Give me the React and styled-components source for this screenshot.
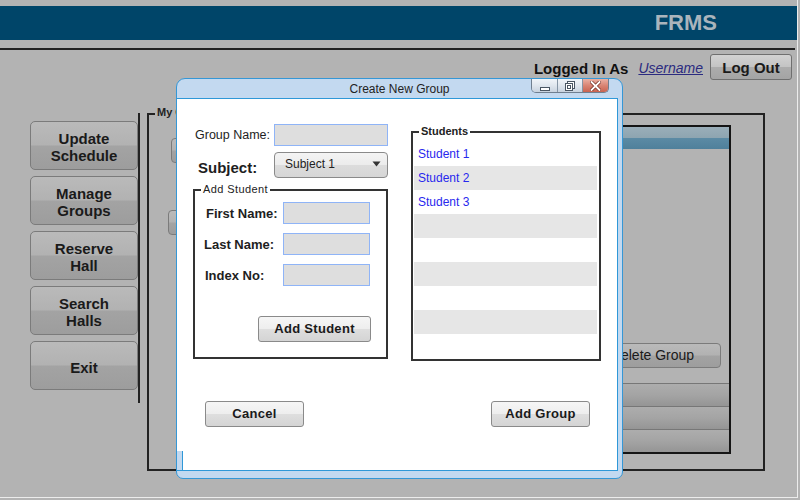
import styled, { createGlobalStyle } from 'styled-components'

const GlobalStyle = createGlobalStyle`
  html, body {
    margin: 0;
    padding: 0;
    background: #b3b3b3;
    overflow: hidden;
  }
  body {
    font-family: "Liberation Sans", Arial, sans-serif;
    color: #1e1e1e;
  }
  * {
    box-sizing: border-box;
  }
`

const Frame = styled.div`
  position: relative;
  width: 798px;
  height: 498px;
  padding-top: 6px;
  border-right: 1px solid #ececec;
  border-bottom: 1px solid #ececec;
`

const Header = styled.div`
  height: 34px;
  background: #004569;
  display: flex;
  align-items: center;
  justify-content: flex-end;
  padding-right: 80px;
`

const Brand = styled.h1`
  margin: 0;
  font-size: 22px;
  font-weight: 700;
  color: #aab4bc;
`

const Rule = styled.div`
  margin-top: 8px;
  width: 795px;
  height: 2px;
  background: #222;
`

const UserBar = styled.div`
  margin-top: 4px;
  height: 26px;
  display: flex;
  align-items: center;
  justify-content: flex-end;
  padding-right: 5px;
`

const LoggedIn = styled.span`
  font-size: 15px;
  font-weight: 700;
  color: #111;
  margin: 2px 10px 0 0;
`

const UserLink = styled.a`
  font-size: 14px;
  font-style: italic;
  color: #2b2b80;
  text-decoration: underline;
  margin: 2px 7px 0 0;
`

const GreyButton = styled.button`
  width: ${p => p.$w}px;
  height: ${p => p.$h}px;
  padding: 0;
  border: 1px solid #7b7b7b;
  border-radius: 5px;
  background: linear-gradient(#bababa 0%, #b2b2b2 48%, #a3a3a3 52%, #9d9d9d 100%);
  font-family: "Liberation Sans", Arial, sans-serif;
  font-size: ${p => p.$size || 15}px;
  font-weight: ${p => p.$weight || 700};
  line-height: 17px;
  color: #1a1a1a;
`

const NavButton = styled(GreyButton)`
  padding-top: 3px;
`

const LogOut = styled(GreyButton)`
  border-color: #6f6f6f;
  border-radius: 3px;
  background: linear-gradient(#d2d2d2 0%, #c4c4c4 48%, #acacac 52%, #a4a4a4 100%);
`

const Main = styled.div`
  display: flex;
  align-items: flex-start;
  margin-top: 33px;
`

const Sidebar = styled.nav`
  margin-left: 30px;
  width: 110px;
  height: 290px;
  padding-top: 8px;
  border-right: 2px solid #222;
  display: flex;
  flex-direction: column;
  gap: 6px;
`

const GroupBox = styled.div`
  position: relative;
  margin-left: 7px;
  width: 618px;
  height: 358px;
  border: 2px solid #222;
  display: flex;
  align-items: flex-start;
`

const Legend = styled.span`
  position: absolute;
  top: ${p => p.$top || -8}px;
  left: 6px;
  padding: 0 2px;
  background: ${p => p.$bg || '#fff'};
  font-size: 11px;
  font-weight: ${p => p.$weight || 400};
  letter-spacing: ${p => p.$spacing || 0}px;
  line-height: 13px;
  color: #222;
`

const ActionColumn = styled.div`
  display: flex;
  flex-direction: column;
  align-items: flex-start;
  padding-top: 23px;
  gap: 47px;
`

const SideAction = styled(GreyButton)`
  margin-left: ${p => p.$indent}px;
  border-radius: 4px;
`

const GroupPanel = styled.div`
  margin: 10px 32px 0 auto;
  width: 317px;
  height: 329px;
  border: 2px solid #151515;
  display: flex;
  flex-direction: column;
`

const PanelHeader = styled.div`
  height: 22px;
  background: linear-gradient(#9aaeb9 0%, #8ea5b1 48%, #5b8aa4 52%, #4f809b 100%);
`

const DeleteButton = styled(GreyButton)`
  margin: auto 8px 15px auto;
  border-radius: 4px;
`

const PanelRow = styled.div`
  height: 23px;
  border-top: 1px solid #777;
  background: linear-gradient(#adadad 0%, #a4a4a4 50%, #959595 100%);
`

/* dialog */

const Dialog = styled.div`
  position: absolute;
  left: 176px;
  top: 78px;
  width: 447px;
  height: 401px;
  background: #c3d9f0;
  border: 1px solid #3597d6;
  border-radius: 9px 9px 7px 7px;
  display: flex;
  flex-direction: column;
`

const TitleBar = styled.div`
  position: relative;
  height: 19px;
  display: flex;
  align-items: center;
  justify-content: center;
  font-size: 12px;
  color: #222;
`

const WindowControls = styled.div`
  position: absolute;
  top: 0;
  right: 13px;
  height: 14px;
  display: flex;
  border: 1px solid #6f7f90;
  border-top: none;
  border-radius: 0 0 5px 5px;
  overflow: hidden;
`

const Control = styled.span`
  width: ${p => p.$w}px;
  height: 100%;
  display: flex;
  align-items: center;
  justify-content: center;
  border-left: ${p => (p.$first ? 'none' : '1px solid #8595a5')};
  background: ${p =>
    p.$close
      ? 'linear-gradient(#eab0a3, #d98574 50%, #c96350)'
      : 'linear-gradient(#f1f5f9, #dfe6ee 50%, #c8d3df)'};
`

const DialogBody = styled.div`
  position: relative;
  flex: 1;
  margin: 0 4px 7px 0;
  background: #fff;
  border: 1px solid #2f98d8;
  border-left: none;
  display: flex;
  flex-direction: column;
`

const CornerNotch = styled.span`
  position: absolute;
  left: 0;
  bottom: 0;
  width: 6px;
  height: 19px;
  background: #c3d9f0;
  border-right: 1px solid #2f98d8;
`

const TopSection = styled.div`
  display: flex;
  align-items: flex-start;
  padding-top: 25px;
`

const LeftCol = styled.div`
  margin-left: 16px;
  width: 195px;
  display: flex;
  flex-direction: column;
`

const FieldRow = styled.div`
  display: flex;
  align-items: center;
  height: ${p => p.$h}px;
  margin-top: ${p => p.$mt || 0}px;
`

const FieldLabel = styled.label`
  width: 81px;
  padding-left: ${p => p.$pl}px;
  padding-top: ${p => p.$pt || 0}px;
  font-size: ${p => p.$size}px;
  font-weight: ${p => p.$weight || 400};
  color: #1e1e1e;
`

const TextBox = styled.div`
  width: ${p => p.$w}px;
  height: 22px;
  background: #dedede;
  border: 1px solid #8fb4f7;
`

const Select = styled.div`
  width: 114px;
  height: 26px;
  padding: 0 6px 2px 10px;
  display: flex;
  align-items: center;
  justify-content: space-between;
  border: 1px solid #8a8a8a;
  border-radius: 4px;
  background: linear-gradient(#f4f4f4 0%, #ececec 48%, #dcdcdc 52%, #d6d6d6 100%);
  font-size: 12px;
  color: #222;
`

const AddStudentBox = styled.div`
  position: relative;
  margin-top: 11px;
  width: 195px;
  border: 2px solid #333;
  padding: 11px 15px 15px 10px;
  display: flex;
  flex-direction: column;
`

const StudentForm = styled.div`
  display: grid;
  grid-template-columns: 78px 87px;
  grid-auto-rows: 22px;
  row-gap: 9px;
  align-items: center;
`

const FormLabel = styled.label`
  font-size: 13px;
  font-weight: 700;
  color: #1e1e1e;
  margin-left: ${p => p.$shift || 0}px;
`

const LightButton = styled.button`
  width: ${p => p.$w}px;
  height: 26px;
  padding: 0 0 2px;
  border: 1px solid #8a8a8a;
  border-radius: 3px;
  background: linear-gradient(#f6f6f6 0%, #eeeeee 48%, #dedede 52%, #d4d4d4 100%);
  font-family: "Liberation Sans", Arial, sans-serif;
  font-size: 13px;
  font-weight: 700;
  letter-spacing: 0.3px;
  color: #1a1a1a;
  align-self: ${p => p.$align || 'auto'};
  margin-top: ${p => p.$mt || 0}px;
`

const StudentsBox = styled.div`
  position: relative;
  margin: 7px 0 0 23px;
  width: 190px;
  height: 230px;
  border: 2px solid #333;
  padding: 9px 2px 0 1px;
`

const StudentRow = styled.div`
  height: 24px;
  line-height: 24px;
  padding-left: 4px;
  font-size: 12px;
  color: #2828ee;
  background: ${p => (p.$shaded ? '#e6e6e6' : '#fff')};
`

const Footer = styled.div`
  display: flex;
  justify-content: space-between;
  margin-top: 40px;
  padding: 0 27px 0 28px;
`

const navItems = [
  ['Update', 'Schedule'],
  ['Manage', 'Groups'],
  ['Reserve', 'Hall'],
  ['Search', 'Halls'],
  ['Exit'],
]

const students = ['Student 1', 'Student 2', 'Student 3', '', '', '', '', '', '']

const App = () => {
  return (
    <>
      <GlobalStyle />
      <Frame>
        <Header>
          <Brand>FRMS</Brand>
        </Header>
        <Rule />
        <UserBar>
          <LoggedIn>Logged In As</LoggedIn>
          <UserLink href="#">Username</UserLink>
          <LogOut $w={82} $h={26}>Log Out</LogOut>
        </UserBar>

        <Main>
          <Sidebar>
            {navItems.map(lines => (
              <NavButton key={lines[0]} $w={108} $h={49}>
                {lines.map((l, i) => (
                  <span key={l}>
                    {i > 0 && <br />}
                    {l}
                  </span>
                ))}
              </NavButton>
            ))}
          </Sidebar>

          <GroupBox>
            <Legend $bg="#b3b3b3" $weight={700} $top={-9}>My Groups</Legend>
            {/* buttons mostly covered by the dialog */}
            <ActionColumn>
              <SideAction $w={110} $h={25} $indent={22} aria-label="Create Group" />
              <SideAction $w={110} $h={25} $indent={19} aria-label="Edit Group" />
            </ActionColumn>
            <GroupPanel>
              <PanelHeader />
              <DeleteButton $w={137} $h={25} $size={14} $weight={400}>Delete Group</DeleteButton>
              <PanelRow />
              <PanelRow />
              <PanelRow />
            </GroupPanel>
          </GroupBox>
        </Main>

        <Dialog>
          <TitleBar>
            Create New Group
            <WindowControls>
              <Control $w={25} $first>
                <svg width="10" height="10" viewBox="0 0 10 10">
                  <rect x="0.5" y="6.5" width="9" height="3" fill="#fff" stroke="#4a5663" />
                </svg>
              </Control>
              <Control $w={25}>
                <svg width="10" height="10" viewBox="0 0 10 10">
                  <rect x="2.5" y="0.5" width="7" height="7" fill="#fff" stroke="#4a5663" />
                  <rect x="0.5" y="2.5" width="7" height="7" fill="#fff" stroke="#4a5663" />
                  <rect x="2.5" y="4.5" width="3" height="3" fill="none" stroke="#4a5663" />
                </svg>
              </Control>
              <Control $w={26} $close>
                <svg width="11" height="10" viewBox="0 0 11 10">
                  <path d="M1.5 1 L9.5 9 M9.5 1 L1.5 9" stroke="#7a3a30" strokeWidth="3.4" strokeLinecap="square" />
                  <path d="M1.5 1 L9.5 9 M9.5 1 L1.5 9" stroke="#fff" strokeWidth="1.8" strokeLinecap="square" />
                </svg>
              </Control>
            </WindowControls>
          </TitleBar>

          <DialogBody>
            <TopSection>
              <LeftCol>
                <FieldRow $h={22}>
                  <FieldLabel $pl={2} $size={12.5}>Group Name:</FieldLabel>
                  <TextBox $w={114} />
                </FieldRow>
                <FieldRow $h={26} $mt={6}>
                  <FieldLabel $pl={5} $pt={5} $size={15} $weight={700}>Subject:</FieldLabel>
                  <Select>
                    Subject 1
                    <svg width="9" height="6" viewBox="0 0 9 6">
                      <path d="M0.5 0.5 H8.5 L4.5 5.5 Z" fill="#333" />
                    </svg>
                  </Select>
                </FieldRow>

                <AddStudentBox>
                  <Legend $top={-8} $spacing={0.4}>Add Student</Legend>
                  <StudentForm>
                    <FormLabel $shift={1}>First Name:</FormLabel>
                    <TextBox $w={87} />
                    <FormLabel $shift={-1}>Last Name:</FormLabel>
                    <TextBox $w={87} />
                    <FormLabel>Index No:</FormLabel>
                    <TextBox $w={87} />
                  </StudentForm>
                  <LightButton $w={113} $mt={30} $align="flex-end">Add Student</LightButton>
                </AddStudentBox>
              </LeftCol>

              <StudentsBox>
                <Legend $top={-8} $weight={700}>Students</Legend>
                {students.map((s, i) => (
                  <StudentRow key={i} $shaded={i % 2 === 1}>{s}</StudentRow>
                ))}
              </StudentsBox>
            </TopSection>

            <Footer>
              <LightButton $w={99}>Cancel</LightButton>
              <LightButton $w={99}>Add Group</LightButton>
            </Footer>
            <CornerNotch />
          </DialogBody>
        </Dialog>
      </Frame>
    </>
  )
}

export default App
